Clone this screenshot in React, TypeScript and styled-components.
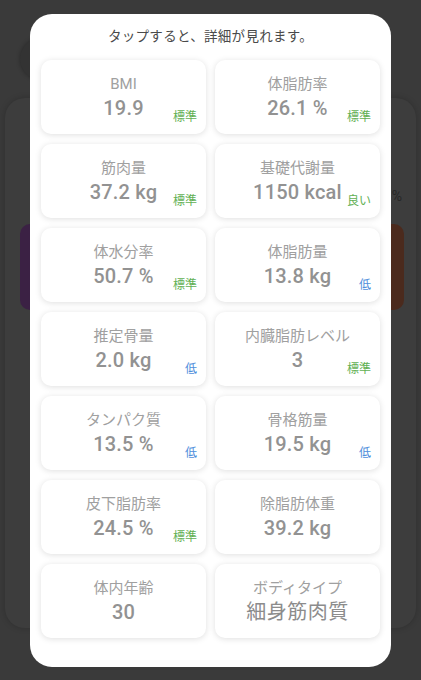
import React from 'react';
import styled, { createGlobalStyle } from 'styled-components';

const GlobalStyle = createGlobalStyle`
  html, body {
    margin: 0;
    padding: 0;
    background: #3a3a3a;
  }
  body {
    font-family: Roboto, 'Noto Sans CJK JP', sans-serif;
  }
`;

const Screen = styled.div`
  position: relative;
  width: 421px;
  height: 680px;
  overflow: hidden;
  background: #3a3a3a;
`;

// dimmed app behind the dialog
const Behind = styled.div`
  display: flex;
  flex-direction: column;
  padding: 38px 5px 0 5px;
  gap: 18px;
`;

const Avatar = styled.div`
  width: 42px;
  height: 42px;
  margin-left: 15px;
  border-radius: 50%;
  background: #333;
  box-shadow: 0 0 4px rgba(0, 0, 0, 0.3);
`;

const BehindCard = styled.div`
  height: 530px;
  border-radius: 20px;
  background: #3d3d3d;
  box-shadow: 0 0 6px rgba(0, 0, 0, 0.2);
  display: flex;
  flex-direction: column;
  padding: 90px 12px 0 15px;
  box-sizing: border-box;
`;

const BehindMark = styled.div`
  align-self: flex-end;
  font-size: 14px;
  color: #262626;
  margin-right: 2px;
`;

const BehindRow = styled.div`
  display: flex;
  justify-content: space-between;
  margin-top: 20px;
`;

const BehindBlock = styled.div<{ $tone: string }>`
  width: 40px;
  height: 86px;
  border-radius: 10px;
  background: ${(p) => p.$tone};
`;

const Dialog = styled.div`
  position: absolute;
  left: 30px;
  top: 14px;
  width: 361px;
  height: 653px;
  box-sizing: border-box;
  padding: 12px 11px 0 11px;
  background: #fff;
  border-radius: 22px;
  display: flex;
  flex-direction: column;
`;

const Hint = styled.div`
  text-align: center;
  font-size: 13.5px;
  line-height: 20px;
  color: #4a4a4a;
  margin-bottom: 14px;
  letter-spacing: 0.3px;
`;

const Grid = styled.div`
  display: grid;
  grid-template-columns: 165px 165px;
  grid-auto-rows: 74px;
  column-gap: 9px;
  row-gap: 10px;
`;

const Card = styled.div`
  position: relative;
  background: #fff;
  border-radius: 10px;
  box-shadow: 0 1px 6px rgba(0, 0, 0, 0.13);
  display: flex;
  flex-direction: column;
  align-items: center;
  padding-top: 14px;
  box-sizing: border-box;
`;

const Label = styled.div`
  font-size: 15px;
  line-height: 20px;
  color: #a0a0a0;
`;

const Value = styled.div<{ $plain?: boolean }>`
  font-size: 20px;
  font-weight: ${(p) => (p.$plain ? 400 : 500)};
  line-height: 26px;
  color: ${(p) => (p.$plain ? '#8c8c8c' : '#929292')};
  margin-top: 1px;
  letter-spacing: ${(p) => (p.$plain ? '0.5px' : '0.2px')};
`;

const Badge = styled.span<{ $tone: 'good' | 'low' }>`
  position: absolute;
  right: 9px;
  bottom: 10px;
  font-size: 12px;
  line-height: 14px;
  color: ${(p) => (p.$tone === 'good' ? '#62b054' : '#4f8fdc')};
`;

type Item = {
  label: string;
  value: string;
  badge?: string;
  tone?: 'good' | 'low';
  plain?: boolean;
};

const items: Item[] = [
  { label: 'BMI', value: '19.9', badge: '標準', tone: 'good' },
  { label: '体脂肪率', value: '26.1 %', badge: '標準', tone: 'good' },
  { label: '筋肉量', value: '37.2 kg', badge: '標準', tone: 'good' },
  { label: '基礎代謝量', value: '1150 kcal', badge: '良い', tone: 'good' },
  { label: '体水分率', value: '50.7 %', badge: '標準', tone: 'good' },
  { label: '体脂肪量', value: '13.8 kg', badge: '低', tone: 'low' },
  { label: '推定骨量', value: '2.0 kg', badge: '低', tone: 'low' },
  { label: '内臓脂肪レベル', value: '3', badge: '標準', tone: 'good' },
  { label: 'タンパク質', value: '13.5 %', badge: '低', tone: 'low' },
  { label: '骨格筋量', value: '19.5 kg', badge: '低', tone: 'low' },
  { label: '皮下脂肪率', value: '24.5 %', badge: '標準', tone: 'good' },
  { label: '除脂肪体重', value: '39.2 kg' },
  { label: '体内年齢', value: '30' },
  { label: 'ボディタイプ', value: '細身筋肉質', plain: true },
];

const App = () => {
  return (
    <Screen>
      <GlobalStyle />
      <Behind>
        <Avatar />
        <BehindCard>
          <BehindMark>%</BehindMark>
          <BehindRow>
            <BehindBlock $tone='#3b2144' />
            <BehindBlock $tone='#4b2a1d' />
          </BehindRow>
        </BehindCard>
      </Behind>
      <Dialog>
        <Hint>タップすると、詳細が見れます。</Hint>
        <Grid>
          {items.map((item) => (
            <Card key={item.label}>
              <Label>{item.label}</Label>
              <Value $plain={item.plain}>{item.value}</Value>
              {item.badge && item.tone && (
                <Badge $tone={item.tone}>{item.badge}</Badge>
              )}
            </Card>
          ))}
        </Grid>
      </Dialog>
    </Screen>
  );
};

export default App;
